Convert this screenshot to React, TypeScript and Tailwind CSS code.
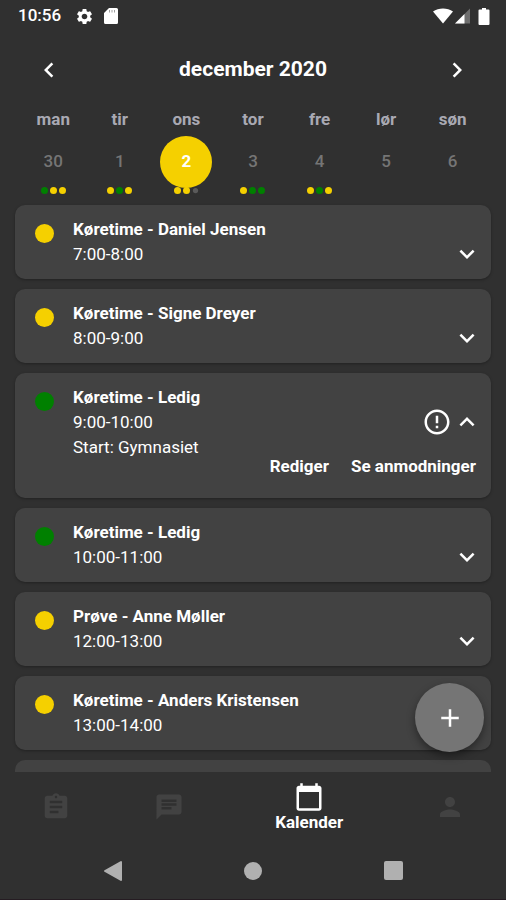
import { useState } from "react";
import {
  MdAdd,
  MdAssignment,
  MdCalendarToday,
  MdChat,
  MdChevronLeft,
  MdChevronRight,
  MdErrorOutline,
  MdExpandLess,
  MdExpandMore,
  MdPerson,
  MdSettings,
} from "react-icons/md";

type Status = "yellow" | "green" | "gray";

const statusColor: Record<Status, string> = {
  yellow: "bg-[#f5d000]",
  green: "bg-[#008000]",
  gray: "bg-[#5a5a5a] scale-75",
};

const days: { name: string; date: number; dots: Status[] }[] = [
  { name: "man", date: 30, dots: ["green", "yellow", "yellow"] },
  { name: "tir", date: 1, dots: ["yellow", "green", "yellow"] },
  { name: "ons", date: 2, dots: ["yellow", "yellow", "gray"] },
  { name: "tor", date: 3, dots: ["yellow", "green", "green"] },
  { name: "fre", date: 4, dots: ["yellow", "green", "yellow"] },
  { name: "lør", date: 5, dots: [] },
  { name: "søn", date: 6, dots: [] },
];

type Lesson = { title: string; time: string; status: Status; start?: string };

const lessons: Lesson[] = [
  { title: "Køretime - Daniel Jensen", time: "7:00-8:00", status: "yellow" },
  { title: "Køretime - Signe Dreyer", time: "8:00-9:00", status: "yellow" },
  { title: "Køretime - Ledig", time: "9:00-10:00", status: "green", start: "Gymnasiet" },
  { title: "Køretime - Ledig", time: "10:00-11:00", status: "green" },
  { title: "Prøve - Anne Møller", time: "12:00-13:00", status: "yellow" },
  { title: "Køretime - Anders Kristensen", time: "13:00-14:00", status: "yellow" },
];

function StatusBar() {
  return (
    <div className="flex h-8 shrink-0 items-center justify-between pr-4 pl-[18px]">
      <div className="flex items-center">
        <span className="text-[17px] font-medium">10:56</span>
        <MdSettings className="ml-3.5 size-[19px]" />
        <svg viewBox="0 0 14 16" className="ml-2.5 h-4 w-3.5" fill="currentColor" aria-hidden="true">
          <path d="M5 0h7.5A1.5 1.5 0 0 1 14 1.500v13a1.500 1.500 0 0 1-1.500 1.500h-11A1.500 1.500 0 0 1 0 14.500V5z" />
          <path d="M5.500 2v2.500M8 2v2.500M10.500 2v2.500" stroke="#303030" strokeWidth="1" opacity=".45" />
        </svg>
      </div>
      <div className="flex items-center">
        <svg viewBox="0 0 20 16" className="h-4 w-5" fill="currentColor" aria-hidden="true">
          <path d="M0 3.500C5.500-.5 14.500-.5 20 3.500L10 15.500z" />
        </svg>
        <svg viewBox="0 0 15 16" className="ml-0.5 h-4 w-[15px]" fill="currentColor" aria-hidden="true">
          <path d="M15 .5v15H0z" opacity=".3" />
          <path d="M9.500 6v9.500H0z" />
        </svg>
        <svg viewBox="0 0 12 17" className="ml-2 h-[17px] w-3" fill="currentColor" aria-hidden="true">
          <path d="M4 0h4v1.500h2.500a1 1 0 0 1 1 1V16a1 1 0 0 1-1 1h-9a1 1 0 0 1-1-1V2.500a1 1 0 0 1 1-1H4z" />
        </svg>
      </div>
    </div>
  );
}

function Week({ selected, onSelect }: { selected: number; onSelect: (date: number) => void }) {
  return (
    <div className="grid shrink-0 grid-cols-7 px-5">
      {days.map((day) => (
        <button key={day.date} type="button" onClick={() => onSelect(day.date)} className="flex flex-col items-center">
          <span className="text-[17px] leading-6 font-bold text-[#a9a9b3]">{day.name}</span>
          <span
            className={
              day.date === selected
                ? "mt-[5px] flex size-[52px] items-center justify-center rounded-full bg-[#f5d000] text-[17px] font-bold text-white"
                : "mt-[5px] flex size-[52px] items-center justify-center rounded-full text-[17px] font-medium text-[#757575]"
            }
          >
            {day.date}
          </span>
          <span className="-mt-px flex h-[7px] gap-0.5">
            {day.dots.map((dot, i) => (
              <span key={i} className={`size-[7px] rounded-full ${statusColor[dot]}`} />
            ))}
          </span>
        </button>
      ))}
    </div>
  );
}

function LessonCard({ lesson }: { lesson: Lesson }) {
  const [open, setOpen] = useState(Boolean(lesson.start));
  const expanded = open && lesson.start;
  return (
    <li className="flex shrink-0 rounded-[10px] bg-[#424242] py-3 pr-[15px] pl-5 text-[17px] leading-[25px] shadow-[0_1px_3px_rgba(0,0,0,0.3)]">
      <span className={`mt-[7px] size-[19px] shrink-0 rounded-full ${statusColor[lesson.status]}`} />
      <div className="ml-[19px] min-w-0 flex-1">
        <h2 className="font-bold whitespace-nowrap">{lesson.title}</h2>
        <p>{lesson.time}</p>
        {expanded && <p className="whitespace-nowrap">Start: {lesson.start}</p>}
      </div>
      <div className="flex flex-col items-end pt-6">
        <div className="-mr-1.5 flex h-[25px] items-center">
          {expanded && <MdErrorOutline className="size-[30px]" />}
          <button type="button" aria-label={expanded ? "Skjul" : "Vis"} onClick={() => setOpen(!open)}>
            {expanded ? <MdExpandLess className="size-[30px]" /> : <MdExpandMore className="size-[30px]" />}
          </button>
        </div>
        {expanded && (
          <div className="mt-5 mb-[7px] flex gap-[22px] font-bold">
            <button type="button">Rediger</button>
            <button type="button">Se anmodninger</button>
          </div>
        )}
      </div>
    </li>
  );
}

function TabBar() {
  return (
    <nav className="grid h-[70px] shrink-0 grid-cols-[2fr_2fr_3fr_2fr] text-[#424242]">
      <button type="button" aria-label="Opgaver" className="flex items-center justify-center">
        <MdAssignment className="size-[30px]" />
      </button>
      <button type="button" aria-label="Beskeder" className="flex items-center justify-center">
        <MdChat className="size-[30px]" />
      </button>
      <button type="button" className="flex flex-col items-center pt-2.5 text-white">
        <MdCalendarToday className="size-[30px]" />
        <span className="text-[17px] leading-5 font-bold">Kalender</span>
      </button>
      <button type="button" aria-label="Profil" className="flex items-center justify-center">
        <MdPerson className="size-[30px]" />
      </button>
    </nav>
  );
}

function SystemNav() {
  return (
    <div className="flex h-[58px] shrink-0 items-center justify-center gap-[92px] border-b border-[#251c22] text-[#b0b0b0]">
      <button type="button" aria-label="Tilbage" className="flex size-12 items-center justify-center">
        <svg viewBox="0 0 20 22" className="h-[22px] w-5" fill="currentColor" stroke="currentColor" strokeWidth="2" strokeLinejoin="round">
          <path d="M2 11 18 2v18z" />
        </svg>
      </button>
      <button type="button" aria-label="Hjem" className="flex size-12 items-center justify-center">
        <span className="size-[18px] rounded-full bg-current" />
      </button>
      <button type="button" aria-label="Oversigt" className="flex size-12 items-center justify-center">
        <span className="size-[19px] rounded-xs bg-current" />
      </button>
    </div>
  );
}

export default function App() {
  const [selected, setSelected] = useState(2);
  return (
    <div className="flex h-screen flex-col overflow-hidden bg-[#303030] font-[Roboto,sans-serif] text-white">
      <StatusBar />
      <header className="flex h-[75px] shrink-0 items-center justify-between px-[34px]">
        <button type="button" aria-label="Forrige måned">
          <MdChevronLeft className="size-[30px]" />
        </button>
        <h1 className="text-[21px] font-bold">december 2020</h1>
        <button type="button" aria-label="Næste måned">
          <MdChevronRight className="size-[30px]" />
        </button>
      </header>
      <Week selected={selected} onSelect={setSelected} />
      <main className="relative min-h-0 flex-1 overflow-hidden">
        <ul className="flex flex-col gap-2.5 px-[15px] pt-[11px]">
          {lessons.map((lesson) => (
            <LessonCard key={lesson.time} lesson={lesson} />
          ))}
          <li className="h-[74px] shrink-0 rounded-[10px] bg-[#424242]" />
        </ul>
        <button
          type="button"
          aria-label="Tilføj"
          className="absolute right-[22px] bottom-5 flex size-[69px] items-center justify-center rounded-full bg-[#757575] shadow-[0_4px_8px_rgba(0,0,0,0.4)]"
        >
          <MdAdd className="size-[30px]" />
        </button>
      </main>
      <TabBar />
      <SystemNav />
    </div>
  );
}
